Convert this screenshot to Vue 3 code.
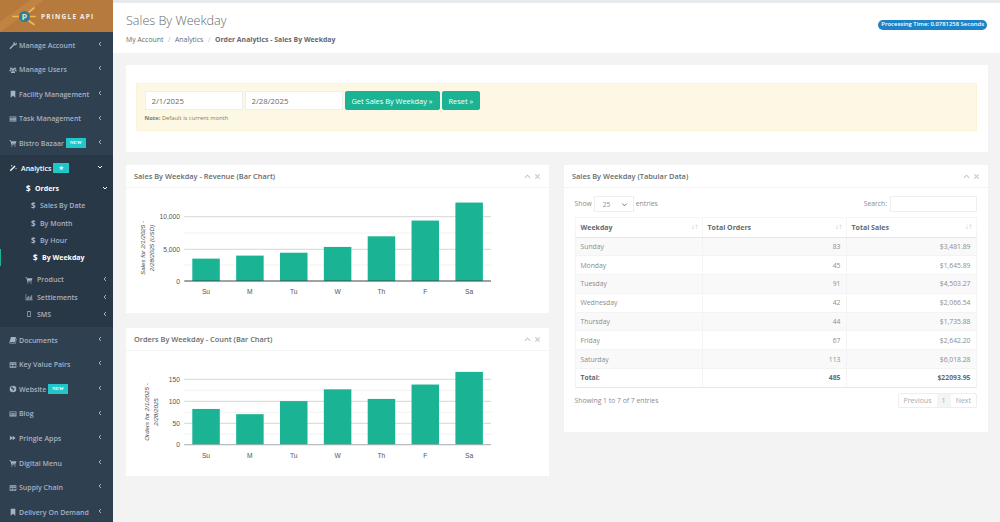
<script setup>
const icons = {
  wrench: 'M9.6 1.2a2.9 2.9 0 0 0-3 3.7L1.3 10.1a1 1 0 0 0 1.5 1.5l5.3-5.3a2.9 2.9 0 0 0 3.7-3.6L10 4.3 8.6 3.9 8.2 2.4l1.6-1.2z',
  users: 'M3 2.2a1.5 1.5 0 1 1 0 3 1.5 1.5 0 0 1 0-3zm6 0a1.5 1.5 0 1 1 0 3 1.5 1.5 0 0 1 0-3zM6 3.4a1.9 1.9 0 1 1 0 3.8 1.9 1.9 0 0 1 0-3.8zM.6 8V6.6C.8 6 1.4 5.8 2.8 5.8l.6.1.5 1.4C3 7.4 2.6 7.6 2.4 8zm11 0H9.6C9.4 7.6 9 7.4 8.1 7.3l.5-1.4.6-.1c1.4 0 2 .2 2.2.8zM3 10.4V9.3C3 8.1 3.8 7.8 6 7.8s3 .3 3 1.5v1.1z',
  bookmark: 'M2.5 1h7v10.5L6 8.8 2.5 11.5z',
  tasks: 'M1 2.2h10v7.6H1zm1 1.3v.9h5v-.9zm6 0v.9h2v-.9zM2 5.5v.9h5v-.9zm6 0v.9h2v-.9zM2 7.5v.9h5v-.9zm6 0v.9h2v-.9z',
  cart: 'M.8 2h2l.4 1.2h8L10 7.3H4.3l.2.8h5.3v1H3.6L2.1 3H.8zM4.5 9.5a.9.9 0 1 1 0 1.8.9.9 0 0 1 0-1.8zm4.6 0a.9.9 0 1 1 0 1.8.9.9 0 0 1 0-1.8z',
  wand: 'M8.4 2.2l1.4 1.4L2.6 10.8 1.2 9.4zM4 1l.5 1.1L5.6 2.6l-1.1.5L4 4.2l-.5-1.1-1.1-.5 1.1-.5zm6.5 4.6l.4.9.9.4-.9.4-.4.9-.4-.9-.9-.4.9-.4z',
  chart: 'M1 2h.9v7.9H11.5v.9H1zm1.8 4.5h1.3v2.8H2.8zm2.2-2h1.3v4.8H5zm2.2 1.2h1.3v3.6H7.2zm2.2-2.5h1.3v6.1H9.4z',
  mobile: 'M3.5 1.5h5v9h-5zm1 1v7h3v-7z',
  book: 'M3 1.5h7.5L9 9.5H1.8c-.6 0-.9.9-.1.9h7.9l1.2-7 .7.2-1.3 7.8H1.5C.5 11.4.3 9.9.7 9z',
  table: 'M1 2h10v8H1zm1 1.6v1.4h3.2V3.6zm4.2 0v1.4H10V3.6zM2 6v1.4h3.2V6zm4.2 0v1.4H10V6zM2 8.2v.9h3.2v-.9zm4.2 0v.9H10v-.9z',
  globe: 'M6 1a5 5 0 1 1 0 10A5 5 0 0 1 6 1zM3 3.4l.5 1.8 1.7.8.3 1.7 1 1.2.6-1.9 1.4-1.3-1.3-.8L5.7 5 5 3.7l1.3-1.3C5 2.2 3.9 2.6 3 3.4z',
  news: 'M.8 2.2h10.400v7.600H.8zm1 1v1.200h8.400V3.200zm0 2.200v.8h3.600v-.8zm4.600 0v.8h3.800v-.8zM1.800 7.200V8h3.600v-.8zm4.600 0V8h3.800v-.8z',
  forward: 'M1.3 2.5l4.2 3.3V2.5L10 6 5.5 9.5V6.2L1.3 9.5z',
}

const menuTop = [
  { label: 'Manage Account', icon: 'wrench' },
  { label: 'Manage Users', icon: 'users' },
  { label: 'Facility Management', icon: 'bookmark' },
  { label: 'Task Management', icon: 'tasks' },
  { label: 'Bistro Bazaar', icon: 'cart', badge: 'NEW' },
]
const dateLinks = [
  { label: 'Sales By Date' },
  { label: 'By Month' },
  { label: 'By Hour' },
  { label: 'By Weekday', active: true },
]
const subMenu = [
  { label: 'Product', icon: 'cart' },
  { label: 'Settlements', icon: 'chart' },
  { label: 'SMS', icon: 'mobile' },
]
const menuBottom = [
  { label: 'Documents', icon: 'book' },
  { label: 'Key Value Pairs', icon: 'table' },
  { label: 'Website', icon: 'globe', badge: 'NEW' },
  { label: 'Blog', icon: 'news' },
  { label: 'Pringle Apps', icon: 'forward' },
  { label: 'Digital Menu', icon: 'cart' },
  { label: 'Supply Chain', icon: 'table' },
  { label: 'Delivery On Demand', icon: 'bookmark' },
]

const days = ['Su', 'M', 'Tu', 'W', 'Th', 'F', 'Sa']
const makeBars = (values, base, scale) =>
  values.map((v, i) => ({
    day: days[i],
    x: 192.3 + i * 43.85,
    y: base - v * scale,
    h: v * scale,
    cx: 206 + i * 43.85,
  }))

const revenue = {
  viewBox: '126 188 423 125',
  base: 281,
  labelY: 291.5,
  baseColor: '#333333',
  bars: makeBars([3480, 3950, 4400, 5300, 6950, 9400, 12200], 281, 0.00643),
  major: [{ y: 216.7, t: '10,000' }, { y: 249.3, t: '5,000' }, { y: 281, t: '0' }],
  minor: [233, 265],
  titleY: 248,
  titles: [{ x: 145, t: 'Sales for 2/1/2025 -' }, { x: 154, t: '2/28/2025 (USD)' }],
}
const orders = {
  viewBox: '126 351 423 125',
  base: 444.7,
  labelY: 455,
  baseColor: '#aaaaaa',
  bars: makeBars([82, 70, 100, 127, 105, 138, 167], 444.7, 0.436),
  major: [{ y: 379.3, t: '150' }, { y: 401.3, t: '100' }, { y: 423.3, t: '50' }, { y: 444.7, t: '0' }],
  minor: [390.3, 412.3, 434],
  titleY: 412,
  titles: [{ x: 149, t: 'Orders for 2/1/2025 -' }, { x: 158, t: '2/28/2025' }],
}
const charts = [
  { title: 'Sales By Weekday - Revenue (Bar Chart)', d: revenue },
  { title: 'Orders By Weekday - Count (Bar Chart)', d: orders },
]

const rows = [
  ['Sunday', '83', '$3,481.89'],
  ['Monday', '45', '$1,645.89'],
  ['Tuesday', '91', '$4,503.27'],
  ['Wednesday', '42', '$2,066.54'],
  ['Thursday', '44', '$1,735.88'],
  ['Friday', '67', '$2,642.20'],
  ['Saturday', '113', '$6,018.28'],
]
const columns = ['Weekday', 'Total Orders', 'Total Sales']
</script>

<template>
  <div class="app">
    <aside class="sidebar">
      <div class="logo">
        <svg class="logo-art" viewBox="0 0 113 32" width="113" height="32">
          <path d="M0 32 L44 0 L30 0 L0 22 Z" fill="#c98c4b" opacity="0.5" />
          <g stroke="#f0b94e" stroke-width="1.7" stroke-linecap="round">
            <path d="M13 16.5h6M29 16.5h6M29 12l5-4M29 21l5 3.5" />
          </g>
          <circle cx="24.5" cy="16.5" r="5.5" fill="#2b7f9e" />
        </svg>
        <span class="logo-p">P</span>
        <span class="logo-text">PRINGLE API</span>
      </div>

      <nav>
        <a v-for="m in menuTop" :key="m.label" class="item">
          <svg class="ico" viewBox="0 0 12 12"><path :d="icons[m.icon]" fill-rule="evenodd" /></svg>
          <span>{{ m.label }}</span>
          <b v-if="m.badge" class="badge">{{ m.badge }}</b>
          <svg class="chev" viewBox="0 0 6 6"><path d="M4 1 2 3l2 2" /></svg>
        </a>

        <div class="active-group">
          <a class="item current">
            <svg class="ico" viewBox="0 0 12 12"><path :d="icons.wand" /></svg>
            <span>Analytics</span>
            <b class="badge star">★</b>
            <svg class="chev" viewBox="0 0 6 6"><path d="M1 2l2 2 2-2" /></svg>
          </a>
          <a class="sub current orders">
            <i class="dollar">$</i>
            <span>Orders</span>
            <svg class="chev wide" viewBox="0 0 6 6"><path d="M1 2l2 2 2-2" /></svg>
          </a>
          <a v-for="d in dateLinks" :key="d.label" class="leaf" :class="{ on: d.active }">
            <i class="dollar">$</i>
            <span>{{ d.label }}</span>
          </a>
          <div class="subgroup">
            <a v-for="s in subMenu" :key="s.label" class="sub subrow">
              <svg class="ico" viewBox="0 0 12 12"><path :d="icons[s.icon]" fill-rule="evenodd" /></svg>
              <span>{{ s.label }}</span>
              <svg class="chev wide" viewBox="0 0 6 6"><path d="M4 1 2 3l2 2" /></svg>
            </a>
          </div>
        </div>

        <a v-for="m in menuBottom" :key="m.label" class="item">
          <svg class="ico" viewBox="0 0 12 12"><path :d="icons[m.icon]" fill-rule="evenodd" /></svg>
          <span>{{ m.label }}</span>
          <b v-if="m.badge" class="badge">{{ m.badge }}</b>
          <svg class="chev" viewBox="0 0 6 6"><path d="M4 1 2 3l2 2" /></svg>
        </a>
      </nav>
    </aside>

    <main class="main">
      <header class="head">
        <div>
          <h1>Sales By Weekday</h1>
          <ol class="crumbs">
            <li>My Account</li>
            <li class="sep">/</li>
            <li>Analytics</li>
            <li class="sep">/</li>
            <li class="strong">Order Analytics - Sales By Weekday</li>
          </ol>
        </div>
        <span class="timing">Processing Time: 0.0781258 Seconds</span>
      </header>

      <div class="content">
        <section class="filter-card">
          <div class="alert">
            <div class="filter-row">
              <input class="date" value="2/1/2025" />
              <input class="date" value="2/28/2025" />
              <button class="btn">Get Sales By Weekday »</button>
              <button class="btn">Reset »</button>
            </div>
            <p class="note"><strong>Note:</strong> Default is current month</p>
          </div>
        </section>

        <div class="columns">
          <div class="stack">
            <section v-for="c in charts" :key="c.title" class="panel">
              <div class="panel-head">
                <h5>{{ c.title }}</h5>
                <span class="tools">
                  <svg viewBox="0 0 8 8"><path d="M1 5.5 4 2.5l3 3" /></svg>
                  <svg viewBox="0 0 8 8"><path d="M1.5 1.5l5 5m0-5-5 5" /></svg>
                </span>
              </div>
              <svg class="chart" :viewBox="c.d.viewBox" width="423" height="125">
                <line v-for="y in c.d.minor" :key="y" x1="184.3" x2="491" :y1="y" :y2="y" stroke="#efefef" stroke-width="0.8" />
                <line v-for="m in c.d.major" :key="m.t" x1="184.3" x2="491" :y1="m.y" :y2="m.y" stroke="#cccccc" stroke-width="0.8" />
                <rect v-for="b in c.d.bars" :key="b.day" :x="b.x" :y="b.y" width="27.5" :height="b.h" fill="#1ab394" />
                <line x1="184.3" x2="491" :y1="c.d.base" :y2="c.d.base" :stroke="c.d.baseColor" stroke-width="0.8" />
                <text v-for="m in c.d.major" :key="'l' + m.t" x="180" :y="m.y + 2.5" text-anchor="end" class="axis">{{ m.t }}</text>
                <text v-for="b in c.d.bars" :key="'d' + b.day" :x="b.cx" :y="c.d.labelY + 2.5" text-anchor="middle" class="axis">{{ b.day }}</text>
                <text v-for="t in c.d.titles" :key="t.t" :transform="`translate(${t.x} ${c.d.titleY}) rotate(-90)`" text-anchor="middle" class="axis-title">{{ t.t }}</text>
              </svg>
            </section>
          </div>

          <section class="panel table-panel">
            <div class="panel-head">
              <h5>Sales By Weekday (Tabular Data)</h5>
              <span class="tools">
                <svg viewBox="0 0 8 8"><path d="M1 5.5 4 2.5l3 3" /></svg>
                <svg viewBox="0 0 8 8"><path d="M1.5 1.5l5 5m0-5-5 5" /></svg>
              </span>
            </div>
            <div class="table-body">
              <div class="dt-top">
                <label class="show">
                  Show
                  <span class="select">
                    25
                    <svg viewBox="0 0 8 8"><path d="M1.5 3 4 5.5 6.5 3" /></svg>
                  </span>
                  entries
                </label>
                <label class="search">Search: <input /></label>
              </div>
              <table>
                <thead>
                  <tr>
                    <th v-for="col in columns" :key="col">
                      {{ col }}
                      <span class="sort">↓↑</span>
                    </th>
                  </tr>
                </thead>
                <tbody>
                  <tr v-for="r in rows" :key="r[0]">
                    <td>{{ r[0] }}</td>
                    <td class="num">{{ r[1] }}</td>
                    <td class="num">{{ r[2] }}</td>
                  </tr>
                </tbody>
                <tfoot>
                  <tr>
                    <td>Total:</td>
                    <td class="num">485</td>
                    <td class="num">$22093.95</td>
                  </tr>
                </tfoot>
              </table>
              <div class="dt-bottom">
                <span class="info">Showing 1 to 7 of 7 entries</span>
                <div class="pager">
                  <span>Previous</span>
                  <span class="cur">1</span>
                  <span>Next</span>
                </div>
              </div>
            </div>
          </section>
        </div>
      </div>
    </main>
    <span class="marker"></span>
  </div>
</template>

<style>
html, body { margin: 0; background: #f3f3f4; }
</style>

<style scoped>
* { box-sizing: border-box; }
.app {
  position: relative;
  display: flex;
  width: 1000px;
  height: 522px;
  overflow: hidden;
  background: #f3f3f4;
  font-family: "Open Sans", "Noto Sans", sans-serif;
  color: #676a6c;
  font-size: 7.5px;
}
.sidebar { width: 113px; flex: none; background: #2f4050; overflow: hidden; }
.logo {
  position: relative;
  height: 32px;
  background: #b67b3c;
  display: flex;
  align-items: center;
}
.logo-art { position: absolute; left: 0; top: 0; }
.logo-p {
  position: absolute;
  left: 21.5px;
  top: 10px;
  font: 700 9px/13px "Open Sans", sans-serif;
  color: #f4d9a0;
}
.logo-text {
  position: relative;
  margin-left: 41px;
  margin-top: 1px;
  font-weight: 700;
  font-size: 6.5px;
  letter-spacing: 1.2px;
  color: #f5efe6;
}
.item {
  position: relative;
  display: flex;
  align-items: center;
  height: 24.6px;
  padding: 1.5px 0 0 9px;
  color: #a7b1c2;
  font-weight: 600;
  font-size: 7px;
  white-space: nowrap;
}
.ico { width: 8px; height: 8px; flex: none; margin-right: 2px; fill: #a7b1c2; }
.badge {
  margin-left: 1.5px;
  padding: 0 4.5px;
  height: 10px;
  background: #23c6c8;
  color: #fff;
  font: 700 4.8px/10px "Liberation Serif", serif;
  letter-spacing: 0.1px;
}
.badge.star { font: 700 6px/10px "DejaVu Sans", sans-serif; padding: 0 5px; margin-left: 2px; }
.chev {
  position: absolute;
  left: 97px;
  top: 50%;
  margin-top: -3.5px;
  width: 6px;
  height: 6px;
  fill: none;
  stroke: #a7b1c2;
  stroke-width: 1;
}
.chev.wide { left: 102px; }
.active-group { background: #293846; padding-bottom: 4.2px; }
.current { color: #fff; }
.current .ico { fill: #fff; margin-right: 4px; }
.current .chev { stroke: #fff; }
.sub {
  position: relative;
  display: flex;
  align-items: center;
  font-weight: 600;
  font-size: 7px;
  white-space: nowrap;
  color: #a7b1c2;
}
.orders { height: 17.5px; padding-left: 26px; color: #fff; font-weight: 700; }
.subgroup { margin-top: 5px; }
.subrow { height: 17.2px; padding-left: 25px; }
.subrow .ico { margin-right: 4px; }
.dollar {
  font-style: normal;
  font-weight: 700;
  font-size: 8px;
  width: 9px;
  flex: none;
}
.leaf {
  display: flex;
  align-items: center;
  height: 17.3px;
  padding-left: 31px;
  color: #a7b1c2;
  font-weight: 600;
  font-size: 7px;
  white-space: nowrap;
}
.leaf .dollar { width: 9px; }
.leaf.on { color: #fff; font-weight: 700; padding-left: 33px; }
.marker {
  position: absolute;
  left: 0;
  top: 249px;
  width: 1px;
  height: 17px;
  background: #1ab394;
}
.main { flex: 1; min-width: 0; padding-top: 3px; background: #f3f3f4; position: relative; }
.main::before {
  content: "";
  position: absolute;
  left: 0;
  right: 0;
  top: 0;
  height: 3px;
  background: #e7eaec;
}
.head {
  height: 50px;
  background: #fff;
  display: flex;
  justify-content: space-between;
  padding: 9px 13px 0 13px;
}
h1 {
  margin: 0;
  font-weight: 300;
  font-size: 12.6px;
  line-height: 18px;
  color: #676a6c;
}
.crumbs {
  list-style: none;
  display: flex;
  margin: 3.5px 0 0;
  padding: 0;
  font-size: 6.9px;
  line-height: 11px;
  color: #676a6c;
}
.sep { margin: 0 4.5px; color: #bbb; }
.strong { font-weight: 700; }
.timing {
  align-self: flex-start;
  margin-top: 8px;
  height: 9.5px;
  padding: 0 3px;
  border-radius: 5px;
  background: #1c84c6;
  color: #fff;
  font-weight: 600;
  font-size: 5.9px;
  line-height: 9.5px;
  white-space: nowrap;
}
.content { padding: 12px 12px 0 12.5px; }
.filter-card { background: #fff; height: 87px; padding: 18px 11px 0 10.5px; }
.alert {
  height: 48px;
  background: #fcf8e3;
  border: 1px solid #faf3da;
  padding: 7px 8px 0 7.5px;
  color: #8a6d3b;
}
.filter-row { display: flex; gap: 2px; }
.date {
  width: 98px;
  height: 19px;
  border: 1px solid #eee;
  background: #fff;
  padding: 0 6px;
  font: 400 7.8px "Open Sans", sans-serif;
  color: #676a6c;
  outline: none;
}
.btn {
  height: 19px;
  padding: 0 6px;
  border: 1px solid #1ab394;
  border-radius: 2px;
  background: #1ab394;
  color: #fff;
  font: 400 7.4px "Open Sans", sans-serif;
  white-space: nowrap;
}
.note { margin: 4px 0 0; font-size: 5.8px; line-height: 9px; color: #8a7a50; }
.columns { display: flex; gap: 15px; margin-top: 13px; align-items: flex-start; }
.stack { width: 423px; display: flex; flex-direction: column; gap: 15px; flex: none; margin-left: .5px; }
.panel { background: #fff; }
.table-panel { width: 424px; height: 267px; flex: none; }
.panel-head {
  height: 23px;
  border-bottom: 1px solid #f3f3f3;
  display: flex;
  align-items: center;
  justify-content: space-between;
  padding: 0 8px;
}
h5 { margin: 0; font-weight: 600; font-size: 7.4px; color: #676a6c; }
.tools { display: flex; gap: 3px; margin-top: 1px; }
.tools svg { width: 7px; height: 7px; fill: none; stroke: #c4c6c8; stroke-width: 1.2; }
.chart { display: block; }
.axis { font: 400 6.7px "Liberation Sans", sans-serif; fill: #555; }
.axis-title { font: italic 400 6.2px "Liberation Sans", sans-serif; fill: #444; }
.table-body { padding: 7px 11px 0 10.5px; }
.dt-top { display: flex; justify-content: space-between; align-items: center; height: 17px; font-size: 6.8px; color: #8a8c8e; }
.show { display: flex; align-items: center; gap: 2px; }
.select {
  display: flex;
  align-items: center;
  justify-content: space-between;
  width: 40px;
  height: 16px;
  border: 1px solid #eee;
  padding: 2px 5px 0 8px;
  font-size: 6.5px;
}
.select svg { width: 7px; height: 7px; fill: none; stroke: #666; stroke-width: 1.1; }
.search { display: flex; align-items: center; gap: 3px; }
.search input { width: 87px; height: 16px; border: 1px solid #eee; outline: none; }
table {
  width: 402px;
  margin-top: 5px;
  border-collapse: collapse;
  table-layout: fixed;
  font-size: 6.8px;
}
th:nth-child(1) { width: 127px; }
th:nth-child(2) { width: 144px; }
th {
  position: relative;
  height: 19.5px;
  text-align: left;
  padding: 0 5px;
  font-weight: 700;
  font-size: 7px;
  color: #676a6c;
  border: 1px solid #f5f5f5;
  border-bottom: 1.5px solid #e7e7e7;
}
.sort {
  position: absolute;
  right: 4px;
  top: 5px;
  font: 400 6px "DejaVu Sans", sans-serif;
  letter-spacing: -1.5px;
  color: #d8d8d8;
}
td {
  height: 18.8px;
  padding: 0 5px;
  color: #8c8c8c;
  border: 1px solid #f3f3f3;
}
tbody tr:nth-child(odd) { background: #f9f9f9; }
.num { text-align: right; }
tfoot td { font-weight: 700; color: #676a6c; border-bottom: 1.5px solid #e7e7e7; }
.dt-bottom {
  display: flex;
  justify-content: space-between;
  align-items: center;
  margin-top: 5px;
  font-size: 6.8px;
  color: #8a8c8e;
}
.info { padding-top: 1px; }
.pager {
  display: flex;
  height: 15px;
  border: 1px solid #eeeeee;
  border-radius: 2px;
  line-height: 13px;
  font-size: 7px;
  color: #a9abad;
}
.pager span { padding: 0 5px; }
.pager .cur { background: #f4f4f4; padding: 0 5px; }
</style>
